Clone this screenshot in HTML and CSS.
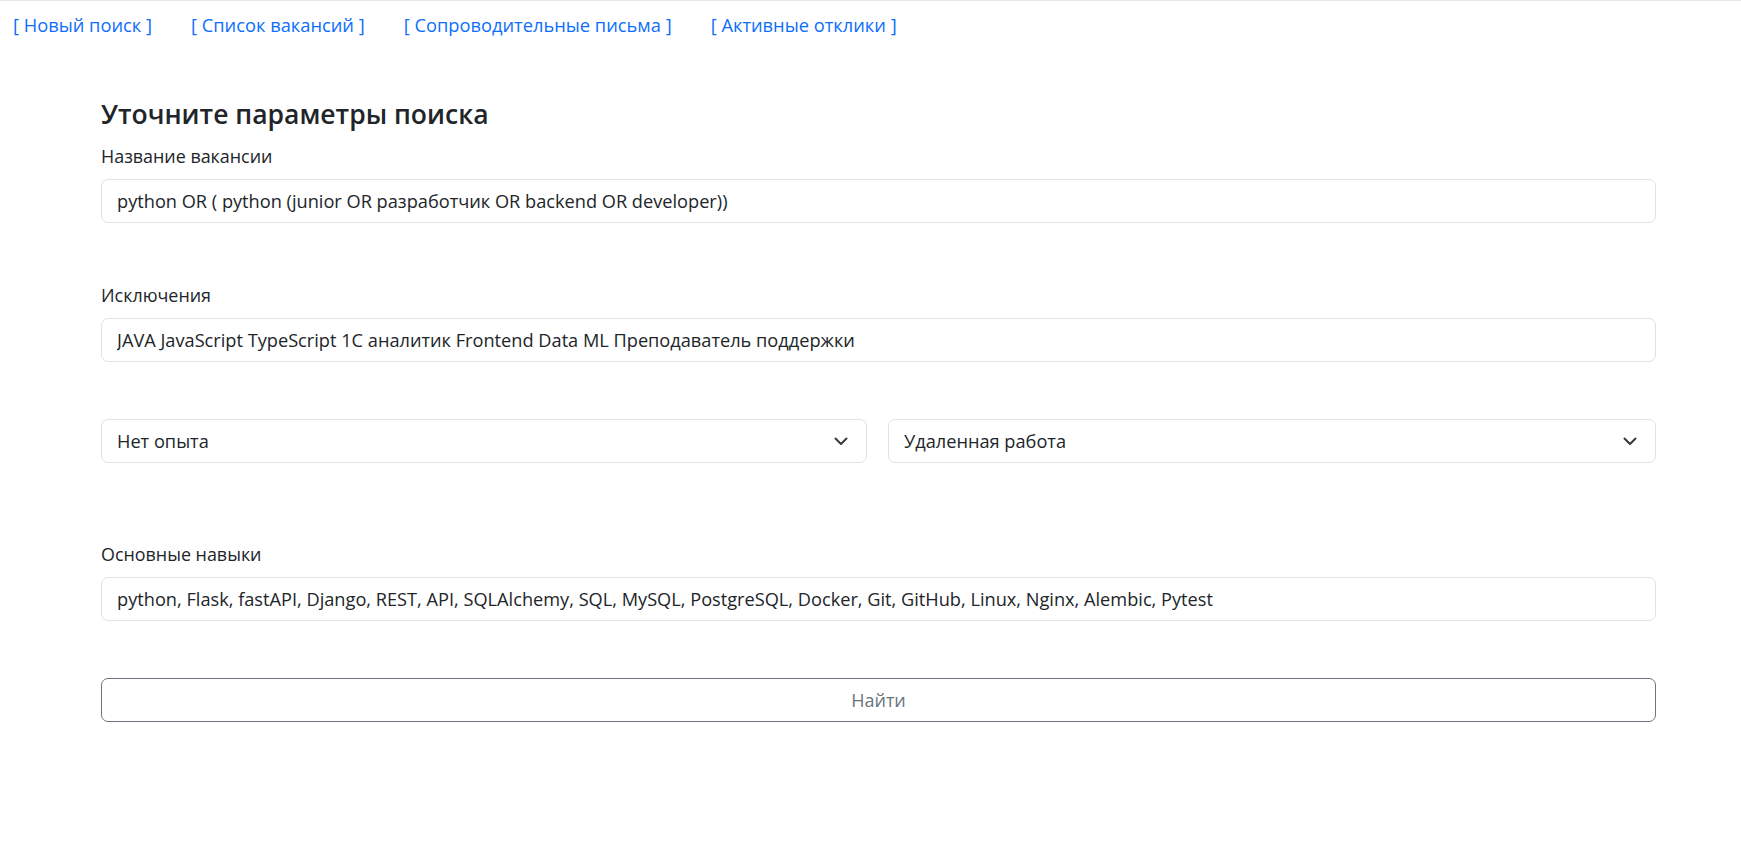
FILE: index.html
```html
<!DOCTYPE html>
<html lang="ru">
<head>
<meta charset="utf-8">
<title>Поиск вакансий</title>
<link rel="stylesheet" href="styles.css">
</head>
<body>
<nav class="topnav">
  <a href="#" class="navlink">[ Новый поиск ]</a>
  <a href="#" class="navlink">[ Список вакансий ]</a>
  <a href="#" class="navlink">[ Сопроводительные письма ]</a>
  <a href="#" class="navlink">[ Активные отклики ]</a>
</nav>
<main class="page">
  <h3 class="title">Уточните параметры поиска</h3>
  <form class="form">
    <div class="field field-first">
      <label class="label">Название вакансии</label>
      <input class="control" type="text" value="python OR ( python (junior OR разработчик OR backend OR developer))">
    </div>
    <div class="field field-second">
      <label class="label">Исключения</label>
      <input class="control" type="text" value="JAVA JavaScript TypeScript 1C аналитик Frontend Data ML Преподаватель поддержки">
    </div>
    <div class="selects">
      <div class="select">
        <span>Нет опыта</span>
        <svg class="chevron" width="14" height="9" viewBox="0 0 14 9"><path d="M1.5 1.5 L7 7 L12.5 1.5" fill="none" stroke="#343a40" stroke-width="2" stroke-linecap="round" stroke-linejoin="round"/></svg>
      </div>
      <div class="select">
        <span>Удаленная работа</span>
        <svg class="chevron" width="14" height="9" viewBox="0 0 14 9"><path d="M1.5 1.5 L7 7 L12.5 1.5" fill="none" stroke="#343a40" stroke-width="2" stroke-linecap="round" stroke-linejoin="round"/></svg>
      </div>
    </div>
    <div class="field field-skills">
      <label class="label">Основные навыки</label>
      <input class="control" type="text" value="python, Flask, fastAPI, Django, REST, API, SQLAlchemy, SQL, MySQL, PostgreSQL, Docker, Git, GitHub, Linux, Nginx, Alembic, Pytest">
    </div>
    <button type="button" class="btn">Найти</button>
  </form>
</main>
</body>
</html>
```
FILE: styles.css
```css
* { box-sizing: border-box; }
html, body { margin: 0; padding: 0; background: #fff; }
body {
  font-family: "Open Sans", "Noto Sans", sans-serif;
  color: #212529;
  border-top: 1px solid #e6e6e6;
}
.topnav {
  display: flex;
  gap: 39px;
  padding: 10px 0 0 13px;
}
.navlink {
  color: #0d6efd;
  text-decoration: none;
  font-size: 18.3px;
  line-height: 27px;
}
.page {
  padding: 0 85px 0 101px;
}
.title {
  margin: 58px 0 12px 0;
  font-size: 26.5px;
  line-height: 36px;
  font-weight: 600;
}
.form {
  display: flex;
  flex-direction: column;
}
.field {
  display: flex;
  flex-direction: column;
}
.label {
  font-size: 17.9px;
  line-height: 24px;
  margin-bottom: 11px;
}
.field-second { margin-top: 60px; }
.field-skills { margin-top: 79px; }
.control {
  height: 44px;
  border: 1px solid #dee2e6;
  border-radius: 7px;
  padding: 0 15px;
  font-family: "Open Sans", "Noto Sans", sans-serif;
  font-size: 18.2px;
  color: #212529;
  background: #fff;
  outline: none;
}
.selects {
  margin-top: 57px;
  display: grid;
  grid-template-columns: 766px 1fr;
  gap: 21px;
}
.select {
  height: 44px;
  border: 1px solid #dee2e6;
  border-radius: 7px;
  padding: 0 18px 0 15px;
  display: flex;
  align-items: center;
  justify-content: space-between;
  font-size: 18.2px;
}
.chevron { display: block; }
.btn {
  margin-top: 57px;
  height: 44px;
  border: 1px solid #6c757d;
  border-radius: 7px;
  background: #fff;
  color: #6c757d;
  font-family: "Open Sans", "Noto Sans", sans-serif;
  font-size: 18px;
}
```
